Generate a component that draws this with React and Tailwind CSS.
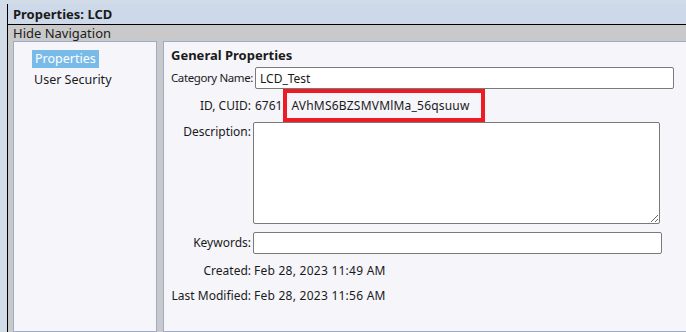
export default function App() {
  return (
    <div className="w-[686px] h-[332px] overflow-hidden flex bg-[#d2dce9] text-[#1a1a1a]" style={{ fontFamily: '"Noto Sans", sans-serif' }}>
      {/* strip at left */}
      <div className="w-[7px] shrink-0" />

      <div className="flex-1 flex flex-col border-l border-black mt-[4px] bg-[#c9c9c9]">
        {/* title */}
        <div className="h-[21px] shrink-0 bg-[#cdd8e8] border-b border-black flex items-center pl-[5px] pt-[1px]">
          <span className="text-[13px] font-bold leading-none">Properties: LCD</span>
        </div>
        <div className="h-[16px] shrink-0 flex items-center pl-[5px]">
          <span className="text-[13px] leading-none text-[#202020]">Hide Navigation</span>
        </div>

        <div className="flex-1 flex pl-[5px] gap-[6px]">
          {/* navigation */}
          <div className="w-[144px] shrink-0 bg-[#f5f5fa] border border-[#9aadca] pt-[8px] pl-[18px]">
            <div className="w-fit flex h-[18px] items-center bg-[#78bbe8] text-white px-[3px] text-[12.5px]">Properties</div>
            <div className="h-[25px] flex items-center pl-[2px] text-[12.5px]">User Security</div>
          </div>

          {/* content */}
          <div className="flex-1 bg-[#f5f5fa] border border-[#9aadca] border-r-0 pl-[7px] pt-[4px] text-[12px]">
            <div className="h-[20px] flex items-center font-bold text-[13px]">General Properties</div>

            <div className="flex items-center h-[22px] mt-[1px]">
              <div className="w-[80px] text-right shrink-0 whitespace-nowrap text-[11.5px] tracking-[-0.4px]">Category Name:</div>
              <input
                readOnly
                value="LCD_Test"
                className="ml-[4px] w-[419px] h-[22px] bg-white border border-[#7a7a7a] rounded-[2px] px-[4px] text-[12px] outline-none"
              />
            </div>

            <div className="flex items-center h-[33px]">
              <div className="w-[80px] text-right shrink-0">ID, CUID:</div>
              <span className="ml-[4px]">6761</span>
              <span className="ml-[1px] h-[33px] w-[202px] border-4 border-[#ed1c24] flex items-center pl-[4px] tracking-[0.2px]">AVhMS6BZSMVMlMa_56qsuuw</span>
            </div>

            <div className="flex items-start h-[102px]">
              <div className="w-[80px] text-right shrink-0 pt-[1px]">Description:</div>
              <textarea
                readOnly
                className="ml-[2px] w-[407px] h-[102px] bg-white border border-[#7a7a7a] rounded-[2px] outline-none"
              />
            </div>

            <div className="flex items-center h-[22px] mt-[8px]">
              <div className="w-[80px] text-right shrink-0">Keywords:</div>
              <input
                readOnly
                className="ml-[2px] w-[409px] h-[22px] bg-white border border-[#7a7a7a] rounded-[2px] outline-none"
              />
            </div>

            <div className="flex items-center h-[25px] mt-[4px]">
              <div className="w-[80px] text-right shrink-0">Created:</div>
              <span className="ml-[3px] tracking-[0.25px]">Feb 28, 2023 11:49 AM</span>
            </div>
            <div className="flex items-center h-[25px]">
              <div className="w-[80px] text-right shrink-0 whitespace-nowrap">Last Modified:</div>
              <span className="ml-[3px] tracking-[0.25px]">Feb 28, 2023 11:56 AM</span>
            </div>
          </div>
        </div>
      </div>
    </div>
  )
}
